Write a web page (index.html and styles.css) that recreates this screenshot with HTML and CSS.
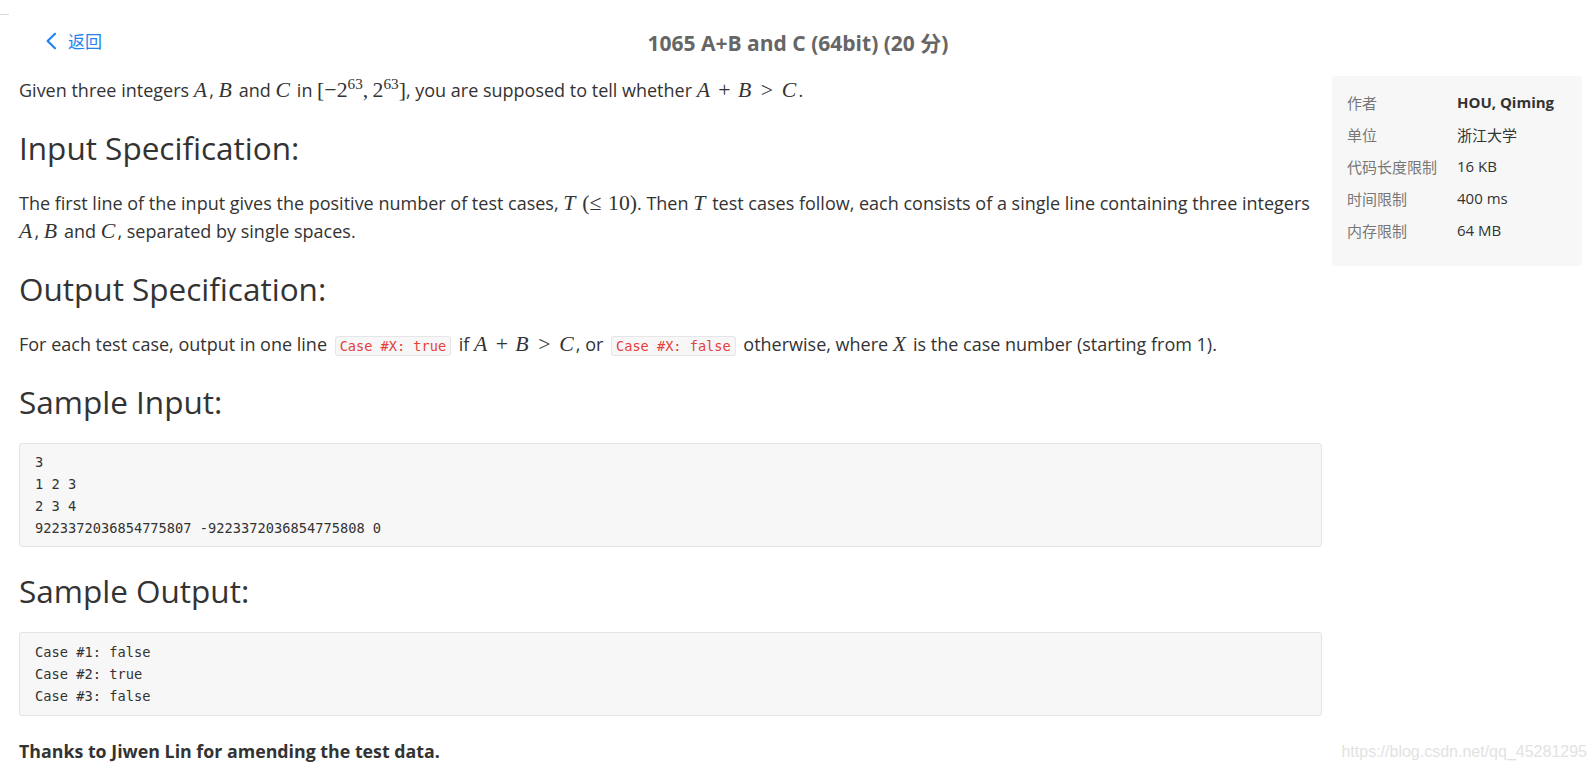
FILE: index.html
```html
<!DOCTYPE html>
<html lang="zh-CN">
<head>
<meta charset="utf-8">
<title>1065 A+B and C (64bit)</title>
<link rel="stylesheet" href="styles.css">
</head>
<body>
<div class="corner-line"></div>
<header class="topbar">
  <a class="back" href="#">
    <svg class="back-icon" width="12" height="18" viewBox="0 0 12 18"><path d="M10 1.8 L2.6 9 L10 16.2" fill="none" stroke="currentColor" stroke-width="2.2" stroke-linecap="round" stroke-linejoin="round"/></svg>
    <span>返回</span>
  </a>
  <h1 class="title">1065 A+B and C (64bit) (20 分)</h1>
  <div class="spacer"></div>
</header>
<div class="layout">
  <main class="problem">
    <p class="para first">Given three integers <i class="m">A</i>, <i class="m">B</i> and <i class="m">C</i> in <span class="mr">[−2<sup>63</sup>,&#8201;2<sup>63</sup>]</span>, you are supposed to tell whether <i class="m">A</i><span class="mr bin">+</span><i class="m">B</i><span class="mr rel">&gt;</span><i class="m">C</i>.</p>
    <h2 class="sec">Input Specification:</h2>
    <p class="para"><span class="line">The first line of the input gives the positive number of test cases, <i class="m">T</i> <span class="mr">(<span class="rel0">≤</span>10)</span>. Then <i class="m">T</i> test cases follow, each consists of a single line containing three integers</span><br><i class="m">A</i>, <i class="m">B</i> and <i class="m">C</i>, separated by single spaces.</p>
    <h2 class="sec">Output Specification:</h2>
    <p class="para">For each test case, output in one line <code class="ic">Case #X: true</code> if <i class="m">A</i><span class="mr bin">+</span><i class="m">B</i><span class="mr rel">&gt;</span><i class="m">C</i>, or <code class="ic">Case #X: false</code> otherwise, where <i class="m">X</i> is the case number (starting from 1).</p>
    <h2 class="sec">Sample Input:</h2>
    <pre class="code">3
1 2 3
2 3 4
9223372036854775807 -9223372036854775808 0</pre>
    <h2 class="sec">Sample Output:</h2>
    <pre class="code out">Case #1: false
Case #2: true
Case #3: false</pre>
    <p class="thanks">Thanks to Jiwen Lin for amending the test data.</p>
  </main>
  <aside class="info">
    <div class="row"><span class="lab">作者</span><span class="val strong">HOU, Qiming</span></div>
    <div class="row"><span class="lab">单位</span><span class="val">浙江大学</span></div>
    <div class="row"><span class="lab">代码长度限制</span><span class="val">16 KB</span></div>
    <div class="row"><span class="lab">时间限制</span><span class="val">400 ms</span></div>
    <div class="row"><span class="lab">内存限制</span><span class="val">64 MB</span></div>
  </aside>
</div>
<div class="watermark">https://blog.csdn.net/qq_45281295</div>
</body>
</html>
```
FILE: styles.css
```css
html, body {
  margin: 0;
  padding: 0;
  background: #fff;
}
body {
  font-family: "Open Sans", "Noto Sans CJK SC", sans-serif;
  color: #333;
  position: relative;
  min-height: 769px;
  overflow: hidden;
}
.corner-line {
  width: 9px;
  height: 1px;
  background: #dcdcdc;
  margin-top: 14px;
}
.topbar {
  display: grid;
  grid-template-columns: 1fr auto 1fr;
  align-items: center;
  height: 54px;
}
.back {
  display: flex;
  align-items: center;
  gap: 11px;
  padding-left: 45px;
  padding-bottom: 3px;
  color: #1f84ef;
  text-decoration: none;
  font-size: 17px;
  font-family: "Noto Sans CJK SC", sans-serif;
}
.back-icon { display: block; }
.title {
  margin: 0;
  font-size: 21px;
  font-weight: 700;
  color: #666;
  white-space: nowrap;
}
.layout {
  display: flex;
  align-items: flex-start;
  gap: 10px;
  padding: 0 14px 0 19px;
}
.problem {
  flex: 1;
  min-width: 0;
}
.para {
  font-size: 18px;
  line-height: 28px;
  margin: 0;
}
.para.first { margin-top: 7px; }
.line { white-space: nowrap; }
.m {
  font-family: "Liberation Serif", serif;
  font-style: italic;
  font-size: 1.21em;
  line-height: 1;
  letter-spacing: 0.1em;
}
.mr {
  font-family: "Liberation Serif", serif;
  font-size: 1.21em;
  line-height: 1;
}
.bin { padding: 0 0.34em 0 0.28em; }
.rel { padding: 0 0.4em 0 0.34em; }
.rel0 { padding: 0 0.3em 0 0; }
.mr sup {
  font-size: 0.7em;
  line-height: 0;
  vertical-align: 0.55em;
}
.sec {
  font-size: 31.5px;
  font-weight: 400;
  line-height: 40px;
  margin: 24px 0 21px 0;
  color: #333;
}
.sec + .code.out { margin-top: 0; }
.ic {
  font-family: "DejaVu Sans Mono", monospace;
  font-size: 13.6px;
  line-height: 16px;
  color: #e5403a;
  background: #f7f7f7;
  border: 1px solid #e6e6e6;
  border-radius: 3px;
  padding: 1px 4px;
  margin: 0 3px;
}
.code {
  font-family: "DejaVu Sans Mono", monospace;
  font-size: 13.7px;
  line-height: 22px;
  background: #f7f7f7;
  border: 1px solid #e4e4e4;
  border-radius: 3px;
  padding: 7px 15px;
  margin: 0;
  color: #333;
}
.code.out { padding: 8px 15px 8px 15px; }
.thanks {
  font-size: 17.8px;
  line-height: 24px;
  font-weight: 700;
  margin: 23px 0 0 0;
}
.info {
  width: 250px;
  flex: none;
  box-sizing: border-box;
  background: #f7f7f7;
  border-radius: 4px;
  padding: 10px 15px 20px 15px;
  margin-top: 7px;
  font-size: 15px;
}
.row {
  display: flex;
  height: 32px;
  align-items: center;
}
.lab {
  width: 110px;
  flex: none;
  color: #777;
  font-family: "Noto Sans CJK SC", sans-serif;
}
.val {
  color: #333;
}
.val.strong { font-weight: 700; }
.watermark {
  position: absolute;
  right: 9px;
  bottom: 8px;
  font-family: "Liberation Sans", sans-serif;
  font-size: 16px;
  color: #e2e2e2;
}
```
